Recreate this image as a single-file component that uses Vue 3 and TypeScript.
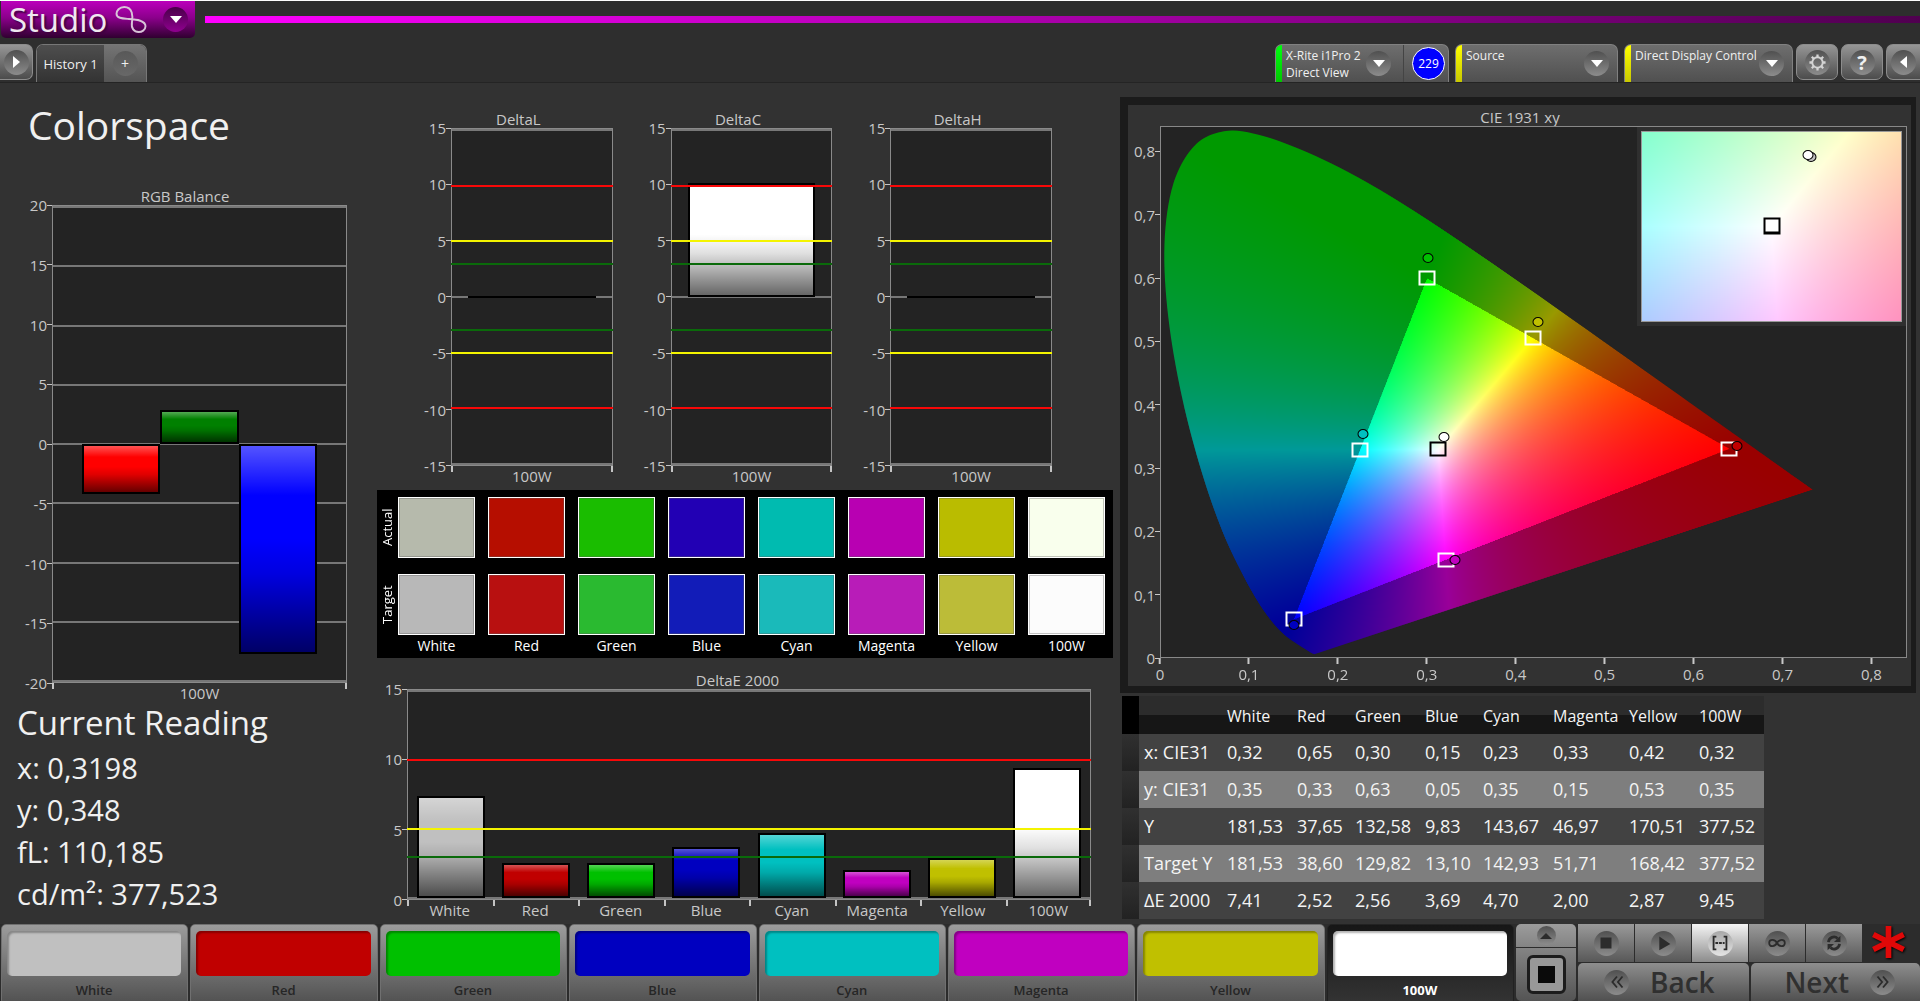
<script setup lang="ts">
import { defineComponent, h, onMounted, ref, type PropType } from 'vue'

interface Bar { value: number; color: string }
interface Limit { at: number; color: string }
interface Point { x: number; y: number; color: string }

/* Column chart with a numeric left axis and named groups along the bottom. */
const BarChart = defineComponent({
  props: {
    title: { type: String, required: true },
    max: { type: Number, required: true },
    min: { type: Number, default: 0 },
    groups: { type: Array as PropType<string[]>, required: true },
    bars: { type: Array as PropType<Bar[]>, required: true },
    limits: { type: Array as PropType<Limit[]>, default: () => [] },
  },
  setup(props) {
    const range = () => props.max - props.min
    const share = (v: number) => `${(v / range()) * 100}%`
    const fromBottom = (v: number) => share(v - props.min)
    return () => {
      const ticks: number[] = []
      for (let t = props.max; t >= props.min; t -= 5) ticks.push(t)
      const perGroup = props.bars.length / props.groups.length
      const slot = 100 / props.groups.length
      const width = (slot * 0.8) / perGroup
      return h('section', { class: 'chart' }, [
        h('h3', { class: 'chart-title' }, props.title),
        h('div', { class: 'chart-body' }, [
          h('ul', { class: 'chart-scale' }, ticks.map((t) => h('li', String(t)))),
          h('div', { class: 'chart-plot' }, [
            ...ticks.map((t) => h('i', { class: 'chart-grid', style: { bottom: fromBottom(t) } })),
            ...props.bars.map((b, i) => {
              const group = Math.floor(i / perGroup)
              return h('i', {
                class: ['chart-bar', { thin: Math.abs(b.value) < 0.5 }],
                style: {
                  left: `${slot * group + slot * 0.1 + width * (i % perGroup)}%`,
                  width: `${width}%`,
                  bottom: fromBottom(Math.min(0, b.value)),
                  height: share(Math.abs(b.value)),
                  backgroundColor: b.color,
                },
              })
            }),
            ...props.limits.map((l) =>
              h('i', { class: 'chart-limit', style: { bottom: fromBottom(l.at), background: l.color } })),
          ]),
        ]),
        h('ul', { class: 'chart-groups' }, props.groups.map((g) => h('li', g))),
      ])
    }
  },
})

const names = ['White', 'Red', 'Green', 'Blue', 'Cyan', 'Magenta', 'Yellow', '100W']
const pure = ['#c0c0c0', '#c00000', '#00c000', '#0000c0', '#00c0c0', '#c000c0', '#c0c000', '#ffffff']
const actual = ['#b6baac', '#b60e00', '#1abd00', '#2200b4', '#00bbb0', '#b800b2', '#babc00', '#f9ffed']
const target = ['#b8b8b8', '#b81010', '#2aba30', '#121cb8', '#1ababa', '#b81cb8', '#bcbc38', '#fcfcfc']

const rgbBars: Bar[] = [
  { value: -4.2, color: '#ff0000' },
  { value: 2.9, color: '#008000' },
  { value: -17.7, color: '#0000ff' },
]
const deltas = [
  { title: 'DeltaL', value: -0.1 },
  { title: 'DeltaC', value: 10.2 },
  { title: 'DeltaH', value: -0.1 },
]
const upper: Limit[] = [
  { at: 10, color: '#f80808' },
  { at: 5, color: '#f4f400' },
  { at: 3, color: '#0a6a0a' },
]
const bothSides: Limit[] = [...upper, ...upper.map((l) => ({ at: -l.at, color: l.color }))]

const deltaE = [7.41, 2.52, 2.56, 3.69, 4.7, 2.0, 2.87, 9.45]
const deltaEBars: Bar[] = deltaE.map((value, i) => ({ value, color: pure[i] }))

const readings = ['x: 0,3198', 'y: 0,348', 'fL: 110,185', 'cd/m²: 377,523']

const rows = [
  { label: 'x: CIE31', cells: ['0,32', '0,65', '0,30', '0,15', '0,23', '0,33', '0,42', '0,32'] },
  { label: 'y: CIE31', cells: ['0,35', '0,33', '0,63', '0,05', '0,35', '0,15', '0,53', '0,35'] },
  { label: 'Y', cells: ['181,53', '37,65', '132,58', '9,83', '143,67', '46,97', '170,51', '377,52'] },
  { label: 'Target Y', cells: ['181,53', '38,60', '129,82', '13,10', '142,93', '51,71', '168,42', '377,52'] },
  { label: 'ΔE 2000', cells: ['7,41', '2,52', '2,56', '3,69', '4,70', '2,00', '2,87', '9,45'] },
]

/* Chromaticity diagram */
const extent = 0.84
const cieTicks = [0, 0.1, 0.2, 0.3, 0.4, 0.5, 0.6, 0.7, 0.8]
const comma = (v: number) => String(v).replace('.', ',')
const pct = (v: number) => `${(v / extent) * 100}%`

const targets: Point[] = [
  { x: 0.64, y: 0.33, color: '#fff' },
  { x: 0.3, y: 0.6, color: '#fff' },
  { x: 0.15, y: 0.06, color: '#fff' },
  { x: 0.2246, y: 0.3287, color: '#fff' },
  { x: 0.3209, y: 0.1542, color: '#fff' },
  { x: 0.4193, y: 0.5053, color: '#fff' },
  { x: 0.3127, y: 0.329, color: '#000' },
]
const measured: Point[] = [
  { x: 0.65, y: 0.334, color: '#c00000' },
  { x: 0.301, y: 0.632, color: '#00c000' },
  { x: 0.15, y: 0.051, color: '#0000c0' },
  { x: 0.228, y: 0.353, color: '#00c0c0' },
  { x: 0.332, y: 0.154, color: '#c000c0' },
  { x: 0.425, y: 0.531, color: '#c0c000' },
  { x: 0.3195, y: 0.348, color: '#ffffff' },
]
const white = { x: 0.3127, y: 0.329 }
const reach = 0.025
const insetLeft = (x: number) => `${((x - white.x + reach) / (2 * reach)) * 100}%`
const insetBottom = (y: number) => `${((y - white.y + reach) / (2 * reach)) * 100}%`
const insetMeasured: Point[] = [
  { x: 0.3203, y: 0.3475, color: '#c0c0c0' },
  { x: 0.3197, y: 0.348, color: '#ffffff' },
]

const locus = [
  0.1741, 0.005, 0.1714, 0.0051, 0.1644, 0.0109, 0.1566, 0.0177, 0.144, 0.0297, 0.1355, 0.0399,
  0.1241, 0.0578, 0.1096, 0.0868, 0.0913, 0.1327, 0.0687, 0.2007, 0.0454, 0.295, 0.0235, 0.4127,
  0.0082, 0.5384, 0.0039, 0.6548, 0.0139, 0.7502, 0.0389, 0.812, 0.0743, 0.8338, 0.1142, 0.8262,
  0.1547, 0.8059, 0.1929, 0.7816, 0.2296, 0.7543, 0.2658, 0.7243, 0.3016, 0.6923, 0.3373, 0.6589,
  0.3731, 0.6245, 0.4087, 0.5896, 0.4441, 0.5547, 0.4788, 0.5202, 0.5125, 0.4866, 0.5448, 0.4544,
  0.5752, 0.4242, 0.6029, 0.3965, 0.627, 0.3725, 0.6658, 0.334, 0.6915, 0.3083, 0.719, 0.2809,
  0.7347, 0.2653,
]

/* Brightest linear RGB for a chromaticity; colours outside the gamut are dimmed. */
function shade(x: number, y: number): number[] {
  const X = x / Math.max(y, 0.0001)
  const Z = (1 - x - y) / Math.max(y, 0.0001)
  const lin = [
    3.2406 * X - 1.5372 - 0.4986 * Z,
    -0.9689 * X + 1.8758 + 0.0415 * Z,
    0.0557 * X - 0.204 + 1.057 * Z,
  ]
  const top = Math.max(...lin)
  const gain = Math.min(...lin) < -0.0005 * top ? 153 : 255
  return lin.map((c) => Math.max(0, c / top) * gain)
}

function paint(w: number, hgt: number, x0: number, y0: number, dx: number, dy: number) {
  const c = document.createElement('canvas')
  c.width = w
  c.height = hgt
  const g = c.getContext('2d')!
  const img = g.createImageData(w, hgt)
  for (let j = 0; j < hgt; j++) {
    for (let i = 0; i < w; i++) {
      const rgb = shade(x0 + (dx * (i + 0.5)) / w, y0 + dy * (1 - (j + 0.5) / hgt))
      const o = (j * w + i) * 4
      img.data[o] = rgb[0]
      img.data[o + 1] = rgb[1]
      img.data[o + 2] = rgb[2]
      img.data[o + 3] = 255
    }
  }
  g.putImageData(img, 0, 0)
  return c
}

const gamut = ref<HTMLCanvasElement | null>(null)
const detail = ref<HTMLCanvasElement | null>(null)

onMounted(() => {
  const main = gamut.value!
  const g = main.getContext('2d')!
  const pts: [number, number][] = []
  for (let i = 0; i < locus.length; i += 2) {
    pts.push([(locus[i] / extent) * main.width, (1 - locus[i + 1] / extent) * main.height])
  }
  g.beginPath()
  g.moveTo(...pts[0])
  for (let i = 0; i < pts.length - 1; i++) {
    const a = pts[Math.max(0, i - 1)]
    const b = pts[i]
    const c = pts[i + 1]
    const d = pts[Math.min(pts.length - 1, i + 2)]
    g.bezierCurveTo(
      b[0] + (c[0] - a[0]) / 6, b[1] + (c[1] - a[1]) / 6,
      c[0] - (d[0] - b[0]) / 6, c[1] - (d[1] - b[1]) / 6,
      c[0], c[1],
    )
  }
  g.closePath()
  g.clip()
  g.drawImage(paint(main.width, main.height, 0, 0, extent, extent), 0, 0)

  const small = detail.value!
  small.getContext('2d')!.drawImage(
    paint(small.width, small.height, white.x - reach, white.y - reach, 2 * reach, 2 * reach), 0, 0)
})

const selected = ref('100W')
</script>

<template>
  <div class="app">
    <header class="brand">
      <button class="logo" type="button" aria-label="Studio menu">
        <span class="logo-text">Studio</span>
        <svg class="logo-mark" viewBox="0 0 32 30" aria-hidden="true">
          <path d="M9 2C4 2 1 6 1 9C1 14 8 14 14 14.500C22 15 31 16 31 22C31 26 27 28 24 28C19 28 16 24 17 18C18 12 18 2 9 2Z" fill="none" stroke="#d8c4d8" stroke-width="2" />
        </svg>
        <span class="logo-drop"><i class="tri down"></i></span>
      </button>
      <div class="beam"></div>
    </header>

    <nav class="tabs">
      <button class="metal edge-left" type="button" aria-label="Open left panel"><span class="disc"><i class="tri right"></i></span></button>
      <div class="tab-group">
        <button class="tab" type="button">History 1</button>
        <button class="tab-add" type="button" aria-label="Add tab"><span class="disc flat">+</span></button>
      </div>
      <div class="spacer"></div>
      <div class="device meter">
        <button class="device-main" type="button">
          <i class="flag green"></i>
          <span class="device-name">X-Rite i1Pro 2<br>Direct View</span>
          <span class="disc"><i class="tri down"></i></span>
        </button>
        <span class="count-wrap"><span class="count">229</span></span>
      </div>
      <button class="device device-main source" type="button">
        <i class="flag yellow"></i>
        <span class="device-name">Source</span>
        <span class="disc"><i class="tri down"></i></span>
      </button>
      <button class="device device-main display" type="button">
        <i class="flag yellow"></i>
        <span class="device-name">Direct Display Control</span>
        <span class="disc"><i class="tri down"></i></span>
      </button>
      <button class="metal" type="button" aria-label="Settings">
        <span class="disc">
          <svg viewBox="0 0 20 20" aria-hidden="true">
            <circle cx="10" cy="10" r="5.500" fill="none" stroke="#d4d4d4" stroke-width="2" />
            <path d="M10 1.500v3M10 15.500v3M1.500 10h3M15.500 10h3M4 4l2 2M14 14l2 2M16 4l-2 2M6 14l-2 2" stroke="#d4d4d4" stroke-width="2.400" />
          </svg>
        </span>
      </button>
      <button class="metal" type="button" aria-label="Help"><span class="disc help">?</span></button>
      <button class="metal edge-right" type="button" aria-label="Open right panel"><span class="disc"><i class="tri left"></i></span></button>
    </nav>

    <main class="workspace">
      <div class="col-left">
        <h1>Colorspace</h1>
        <BarChart class="rgb" title="RGB Balance" :max="20" :min="-20" :groups="['100W']" :bars="rgbBars" />
        <section class="reading">
          <h2>Current Reading</h2>
          <p v-for="r in readings" :key="r">{{ r }}</p>
        </section>
      </div>

      <div class="col-mid">
        <div class="deltas">
          <BarChart v-for="d in deltas" :key="d.title" class="delta" :title="d.title" :max="15" :min="-15"
            :groups="['100W']" :bars="[{ value: d.value, color: '#ffffff' }]" :limits="bothSides" />
        </div>
        <section class="compare">
          <span class="side">Actual</span>
          <i v-for="c in actual" :key="c" class="patch" :style="{ background: c }"></i>
          <span class="side lower">Target</span>
          <i v-for="c in target" :key="c" class="patch lower" :style="{ background: c }"></i>
          <span></span>
          <span v-for="n in names" :key="n" class="patch-name">{{ n }}</span>
        </section>
        <BarChart class="de" title="DeltaE 2000" :max="15" :groups="names" :bars="deltaEBars" :limits="upper" />
      </div>

      <div class="col-right">
        <section class="cie">
          <h3>CIE 1931 xy</h3>
          <div class="cie-body">
            <div class="cie-y">
              <span v-for="t in cieTicks" :key="t" :style="{ bottom: pct(t) }">{{ comma(t) }}</span>
            </div>
            <div class="cie-plot">
              <canvas ref="gamut" class="fill" width="1494" height="1062"></canvas>
              <i v-for="(p, i) in targets" :key="'t' + i" class="square" :style="{ left: pct(p.x), bottom: pct(p.y), borderColor: p.color }"></i>
              <i v-for="(p, i) in measured" :key="'m' + i" class="dot" :style="{ left: pct(p.x), bottom: pct(p.y), background: p.color }"></i>
              <div class="inset">
                <canvas ref="detail" class="fill" width="516" height="378"></canvas>
                <i class="square solid" :style="{ left: insetLeft(white.x), bottom: insetBottom(white.y) }"></i>
                <i v-for="(p, i) in insetMeasured" :key="'z' + i" class="dot" :style="{ left: insetLeft(p.x), bottom: insetBottom(p.y), background: p.color }"></i>
              </div>
            </div>
          </div>
          <div class="cie-x">
            <span v-for="t in cieTicks" :key="t" :style="{ left: pct(t) }">{{ comma(t) }}</span>
          </div>
        </section>

        <table class="data">
          <colgroup>
            <col class="w-handle"><col class="w-label"><col class="w-mid"><col class="w-slim"><col class="w-mid">
            <col class="w-slim"><col class="w-mid"><col class="w-wide"><col class="w-mid"><col class="w-mid">
          </colgroup>
          <thead>
            <tr>
              <td class="corner"></td>
              <td></td>
              <th v-for="n in names" :key="n" scope="col">{{ n }}</th>
            </tr>
          </thead>
          <tbody>
            <tr v-for="r in rows" :key="r.label">
              <td class="handle"></td>
              <th scope="row">{{ r.label }}</th>
              <td v-for="(c, i) in r.cells" :key="i">{{ c }}</td>
            </tr>
          </tbody>
        </table>
      </div>
    </main>

    <footer class="dock">
      <div class="picks">
        <button v-for="(n, i) in names" :key="n" type="button" class="pick" :class="{ on: n === selected }" @click="selected = n">
          <i class="pick-color" :style="{ backgroundColor: pure[i] }"></i>
          <span>{{ n }}</span>
        </button>
      </div>
      <div class="pattern">
        <button class="pattern-up" type="button" aria-label="Show patterns"><span class="disc small"><i class="tri up"></i></span></button>
        <button class="pattern-box" type="button" aria-label="Window pattern"><span class="window"><i></i></span></button>
      </div>
      <div class="transport">
        <div class="keys">
          <button type="button" aria-label="Stop"><span class="disc"><svg viewBox="0 0 24 24"><path d="M6 6h12v12H6z" /></svg></span></button>
          <button type="button" aria-label="Play"><span class="disc"><svg viewBox="0 0 24 24"><path d="M8 5l12 8L8 20z" /></svg></span></button>
          <button type="button" class="lit" aria-label="Measure range"><span class="disc pale"><svg viewBox="0 0 24 24"><path d="M8 5H5v14h3M16 5h3v14h-3" class="line" /><path d="M7 12h10" class="line" stroke-dasharray="3 1" /></svg></span></button>
          <button type="button" aria-label="Continuous"><span class="disc"><svg viewBox="0 0 24 24"><path d="M12 12C10 8 3.500 7 3.500 12S10 16 12 12S20.500 7 20.500 12S14 16 12 12Z" class="line" /></svg></span></button>
          <button type="button" aria-label="Repeat"><span class="disc"><svg viewBox="0 0 24 24"><path d="M6 11a6 6 0 0 1 10-4M18 13a6 6 0 0 1-10 4" class="line thick" /><path d="M19 4v7h-7zM5 20v-7h7z" /></svg></span></button>
          <svg class="star" viewBox="0 0 36 38" aria-hidden="true">
            <path d="M18 2v34M2 11l32 16M34 11L2 27" stroke="#e00808" stroke-width="6" />
          </svg>
        </div>
        <div class="nav-keys">
          <button type="button"><span class="disc"><svg viewBox="0 0 24 24"><path d="M12 6l-5 6 5 6M18 6l-5 6 5 6" class="line" /></svg></span>Back</button>
          <button type="button" class="next">Next<span class="disc"><svg viewBox="0 0 24 24"><path d="M6 6l5 6-5 6M12 6l5 6-5 6" class="line" /></svg></span></button>
        </div>
      </div>
    </footer>
  </div>
</template>

<style>
body { margin: 0; background: #323232; }

.chart { font-size: 15px; }
.chart-title { margin: 0; font-size: 15px; line-height: 18px; font-weight: 400; text-align: center; }
.chart ul { list-style: none; margin: 0; padding: 0; }
.chart-body { display: flex; }
.chart-scale { display: flex; flex-direction: column; justify-content: space-between; box-sizing: border-box; flex: none; width: var(--gutter); }
.chart-scale li { height: 0; display: flex; align-items: center; justify-content: flex-end; line-height: 14px; }
.chart-scale li::after { content: ''; flex: none; width: 5px; height: 1px; background: #c4c4c4; }
.chart-plot { position: relative; flex: 1; box-sizing: border-box; height: var(--plot); background: #232323; border: 2px solid #8a8a8a; border-width: 2px 1px; }
.chart-grid, .chart-limit { position: absolute; left: 0; right: 0; height: 2px; margin-bottom: -1px; background: #777; }
.chart-limit { left: -1px; right: -1px; }
.chart-bar {
  position: absolute; box-sizing: border-box; border: 2px solid #000;
  background-image: linear-gradient(rgba(255,255,255,.33), rgba(255,255,255,0) 24%, rgba(0,0,0,0) 45%, rgba(0,0,0,.12) 62%, rgba(0,0,0,.6));
}
.chart-bar.thin { border-bottom-width: 0; }
.chart .chart-groups { display: flex; padding-left: var(--gutter); }
.chart-groups li { flex: 1; position: relative; text-align: center; line-height: 20px; }
.chart-groups li::before { content: ''; position: absolute; left: 0; top: 0; width: 2px; height: 6px; background: #c4c4c4; }
.chart-groups li:last-child::after { content: ''; position: absolute; right: 0; top: 0; width: 2px; height: 6px; background: #c4c4c4; }
</style>

<style scoped>
.app {
  display: flex; flex-direction: column; min-height: 100vh; box-sizing: border-box;
  border-top: 1px solid #fff; background: #2e2e2e; color: #c8c8c8;
  font-family: "Open Sans", "Noto Sans", sans-serif; font-size: 13px;
}
button { font-family: inherit; border: 0; padding: 0; margin: 0; color: #f0f0f0; cursor: pointer; }
.spacer { flex: 1; }

/* Brand strip */
.brand { display: flex; align-items: center; height: 37px; padding-left: 1px; gap: 10px; }
.logo {
  display: flex; align-items: center; width: 194px; height: 37px; padding: 0 7px 0 8px; box-sizing: border-box;
  background: linear-gradient(#bc00bc, #8c008c 45%, #300030); border-radius: 0 0 5px 5px;
}
.logo-text { font-size: 33px; line-height: 34px; color: #f0e8f0; text-shadow: 2px 2px 2px #400040; }
.logo-mark { width: 32px; height: 29px; margin-left: 8px; flex: none; }
.logo-drop { display: flex; align-items: center; justify-content: center; width: 25px; height: 25px; margin-left: auto; border-radius: 50%; background: linear-gradient(#480048, #900090); }
.beam { flex: 1; height: 7px; background: linear-gradient(90deg, #f0f, #500050); }

/* Shared glyph pieces */
.disc { display: flex; align-items: center; justify-content: center; flex: none; width: 25px; height: 25px; border-radius: 50%; background: linear-gradient(#505050, #8c8c8c); }
.disc.flat { background: linear-gradient(#585858, #686868); font-size: 14px; }
.disc.small { width: 19px; height: 19px; }
.disc.pale { background: linear-gradient(#a8a8a8, #e4e4e4); }
.disc.help { font-size: 20px; font-weight: 700; }
.disc svg { width: 22px; height: 22px; fill: #2c2c2c; }
.disc svg .line { fill: none; stroke: #2c2c2c; stroke-width: 2; }
.disc svg .thick { stroke-width: 3; }
.tri { border: 6px solid transparent; }
.tri.down { border-top: 7px solid #fff; border-bottom: 0; }
.tri.up { border-bottom: 6px solid #2c2c2c; border-top: 0; }
.tri.right { border-left: 7px solid #fff; border-right: 0; }
.tri.left { border-right: 7px solid #fff; border-left: 0; }

/* Tab strip */
.tabs { display: flex; align-items: flex-end; height: 44px; border-bottom: 1px solid #242424; }
.metal { display: flex; align-items: center; justify-content: center; width: 42px; height: 36px; margin: 0 3px 2px 0; box-sizing: border-box; border: 1px solid #8c8c8c; border-radius: 7px; background: linear-gradient(#969696, #4c4c4c); }
.metal .disc svg { width: 19px; height: 19px; }
.edge-left { width: 33px; border-left: 0; border-radius: 0 7px 7px 0; }
.edge-right { width: 34px; margin-right: 0; border-right: 0; border-radius: 7px 0 0 7px; }
.tab-group { display: flex; height: 38px; box-sizing: border-box; border: 1px solid #777; border-bottom: 0; border-radius: 7px 7px 0 0; overflow: hidden; }
.tab { width: 67px; background: linear-gradient(#4e4e4e, #333); font-size: 13px; }
.tab-add { width: 42px; display: flex; align-items: center; justify-content: center; background: linear-gradient(#747474, #545454); }
.device { display: flex; height: 38px; box-sizing: border-box; border: 1px solid #808080; border-bottom: 0; border-radius: 7px 7px 0 0; background: linear-gradient(#6e6e6e, #505050); overflow: hidden; margin-right: 6px; }
.device-main { display: flex; align-items: center; text-align: left; font-size: 12px; line-height: 17px; }
.device > .device-main { background: none; }
.device-name { flex: 1; align-self: flex-start; padding: 2px 0 0 4px; white-space: nowrap; }
.device-main .disc { margin-right: 8px; }
.meter { width: 174px; }
.meter .device-main { flex: 1; border-right: 1px solid #444; }
.meter .device-main .disc { margin-right: 12px; }
.source { width: 163px; }
.display { width: 169px; margin-right: 3px; }
.flag { align-self: stretch; width: 6px; }
.flag.green { background: linear-gradient(#00ff10, #00c800); }
.flag.yellow { background: linear-gradient(#ffff00, #c8c800); }
.count-wrap { display: flex; align-items: center; justify-content: flex-end; width: 44px; padding-right: 2px; box-sizing: border-box; }
.count { display: flex; align-items: center; justify-content: center; width: 31px; height: 31px; margin-right: 1px; border-radius: 50%; border: 1px solid #fff; background: #00f; color: #fff; font-size: 12px; }

/* Workspace */
.workspace { flex: 1; display: grid; grid-template-columns: 377fr 736fr 807fr; background: #323232; }
.workspace > div { min-width: 0; }
.col-left { padding: 18px 30px 0 17px; }
h1 { margin: 0 0 38px 11px; font-size: 39px; line-height: 48px; font-weight: 400; color: #f0f0f0; }
.rgb { --gutter: 29px; --plot: 478px; margin-left: 6px; }
.reading { color: #f0f0f0; }
.reading h2 { margin: 0 0 4px; font-size: 33px; line-height: 40px; font-weight: 400; white-space: nowrap; }
.reading p { margin: 0; font-size: 29px; line-height: 42px; }

.col-mid { padding-top: 27px; }
.deltas { display: grid; grid-template-columns: repeat(3, minmax(0, 1fr)); column-gap: 31px; padding: 0 61px 4px 47px; }
.delta { --gutter: 27px; --plot: 338px; }
.compare { display: grid; grid-template-columns: 8px repeat(8, minmax(0, 1fr)); column-gap: 13px; padding: 7px 8px 1px 0; background: #000; color: #fff; font-size: 14px; }
.compare .side { width: 20px; line-height: 20px; height: 61px; writing-mode: vertical-rl; transform: rotate(180deg); text-align: center; font-size: 13px; }
.patch { height: 61px; box-sizing: border-box; border: 1px solid #fff; box-shadow: inset 0 0 0 1px rgba(90,90,90,.35); }
.compare .lower { margin-top: 16px; }
.patch-name { text-align: center; line-height: 22px; white-space: nowrap; }
.de { --gutter: 23px; --plot: 211px; padding: 13px 22px 0 7px; }

.col-right { padding: 14px 4px 0 7px; }
.cie { border: 8px solid #1b1b1b; border-right-width: 5px; border-bottom-width: 7px; padding: 3px 4px 0 5px; margin-bottom: 3px; }
.cie h3 { margin: 0; font-size: 15px; line-height: 18px; font-weight: 400; text-align: center; }
.cie-body { display: flex; }
.cie-y { position: relative; width: 27px; }
.cie-y span { position: absolute; right: 0; display: flex; align-items: center; height: 14px; line-height: 14px; margin-bottom: -7px; font-size: 15px; }
.cie-y span::after { content: ''; width: 5px; height: 1px; background: #c8c8c8; }
.cie-plot { position: relative; flex: 1; height: 532px; box-sizing: border-box; border: 1px solid #888; background: #232323; }
.fill { display: block; width: 100%; height: 100%; }
.square, .dot { position: absolute; box-sizing: border-box; transform: translate(-50%, 50%); }
.square { width: 17px; height: 15px; border: 2px solid #000; }
.square.solid { width: 17px; height: 17px; background: #fff; border-bottom-width: 3px; }
.dot { width: 11px; height: 10px; border: 1px solid #000; border-radius: 50%; }
.inset { position: absolute; top: 4px; right: 4px; width: 35%; height: 36%; box-sizing: border-box; border: 1px solid #999; outline: 4px solid #2f2f2f; }
.cie-x { position: relative; height: 28px; margin-left: 27px; font-size: 15px; }
.cie-x span { position: absolute; top: 0; transform: translateX(-50%); display: flex; flex-direction: column; align-items: center; line-height: 20px; }
.cie-x span::before { content: ''; width: 2px; height: 6px; background: #c8c8c8; }

.data { table-layout: fixed; width: 641px; margin-left: 2px; border-collapse: collapse; color: #f4f4f4; font-size: 18px; }
.w-handle { width: 17px; }
.w-label { width: 83px; }
.w-mid { width: 70px; }
.w-slim { width: 58px; }
.w-wide { width: 76px; }
.data td, .data th { padding: 0 0 0 5px; text-align: left; font-weight: 400; white-space: nowrap; height: 37px; line-height: 37px; }
.data thead td, .data thead th { height: 38px; padding-top: 2px; line-height: 36px; font-size: 16px; box-sizing: border-box; }
.data thead tr { background: linear-gradient(#2c2c2c 50%, #161616 50%); }
.data .corner { background: #000; }
.data tbody tr { background: #424242; }
.data tbody tr:nth-child(even) { background: #7e7e7e; }
.data .handle { background: linear-gradient(#303030, #222); }

/* Dock */
.dock { display: flex; gap: 2px; height: 77px; background: #2c2c2c; }
.picks { flex: 1; display: grid; grid-template-columns: repeat(8, minmax(0, 1fr)); column-gap: 2px; padding-left: 1px; }
.pick { display: flex; flex-direction: column; padding: 6px 6px 0 5px; box-sizing: border-box; border: 1px solid #707070; border-radius: 5px; background: linear-gradient(#9c9c9c, #505050); color: #262626; font-size: 13px; font-weight: 600; }
.pick-color { width: 100%; height: 45px; border-radius: 5px; box-shadow: inset 2px 2px 2px rgba(0,0,0,.3); }
.pick span { width: 100%; text-align: center; line-height: 28px; }
.pick.on { background: linear-gradient(#161616, #343434); border-color: #222; color: #fff; font-weight: 700; }
.pattern { display: flex; flex-direction: column; gap: 1px; width: 60px; }
.pattern button { display: flex; align-items: center; justify-content: center; }
.pattern-up { height: 23px; background: linear-gradient(#9c9c9c, #848484); border-radius: 5px 5px 0 0; }
.pattern-box { flex: 1; background: linear-gradient(#848484, #545454); border-radius: 0 0 5px 5px; }
.window { display: flex; align-items: center; justify-content: center; width: 33px; height: 33px; border: 3px solid #1c1c1c; border-radius: 6px; background: #989898; }
.window i { width: 17px; height: 17px; background: #0a0a0a; }
.transport { display: flex; flex-direction: column; width: 342px; gap: 1px; }
.keys { display: flex; gap: 1px; height: 38px; }
.keys button { width: 56px; display: flex; align-items: center; justify-content: center; background: linear-gradient(#9a9a9a, #585858); }
.keys .lit { background: linear-gradient(#f4f4f4, #8c8c8c); }
.star { flex: 1; height: 36px; padding-right: 6px; filter: drop-shadow(1px 1px 1px #000); }
.nav-keys { flex: 1; display: flex; gap: 2px; }
.nav-keys button { flex: 1; display: flex; align-items: center; gap: 21px; padding-left: 26px; background: linear-gradient(#8e8e8e, #505050); border-radius: 5px 5px 0 0; color: #303030; font-size: 28px; line-height: 36px; font-weight: 600; }
.nav-keys .next { justify-content: flex-end; padding: 0 25px 0 0; }
</style>
